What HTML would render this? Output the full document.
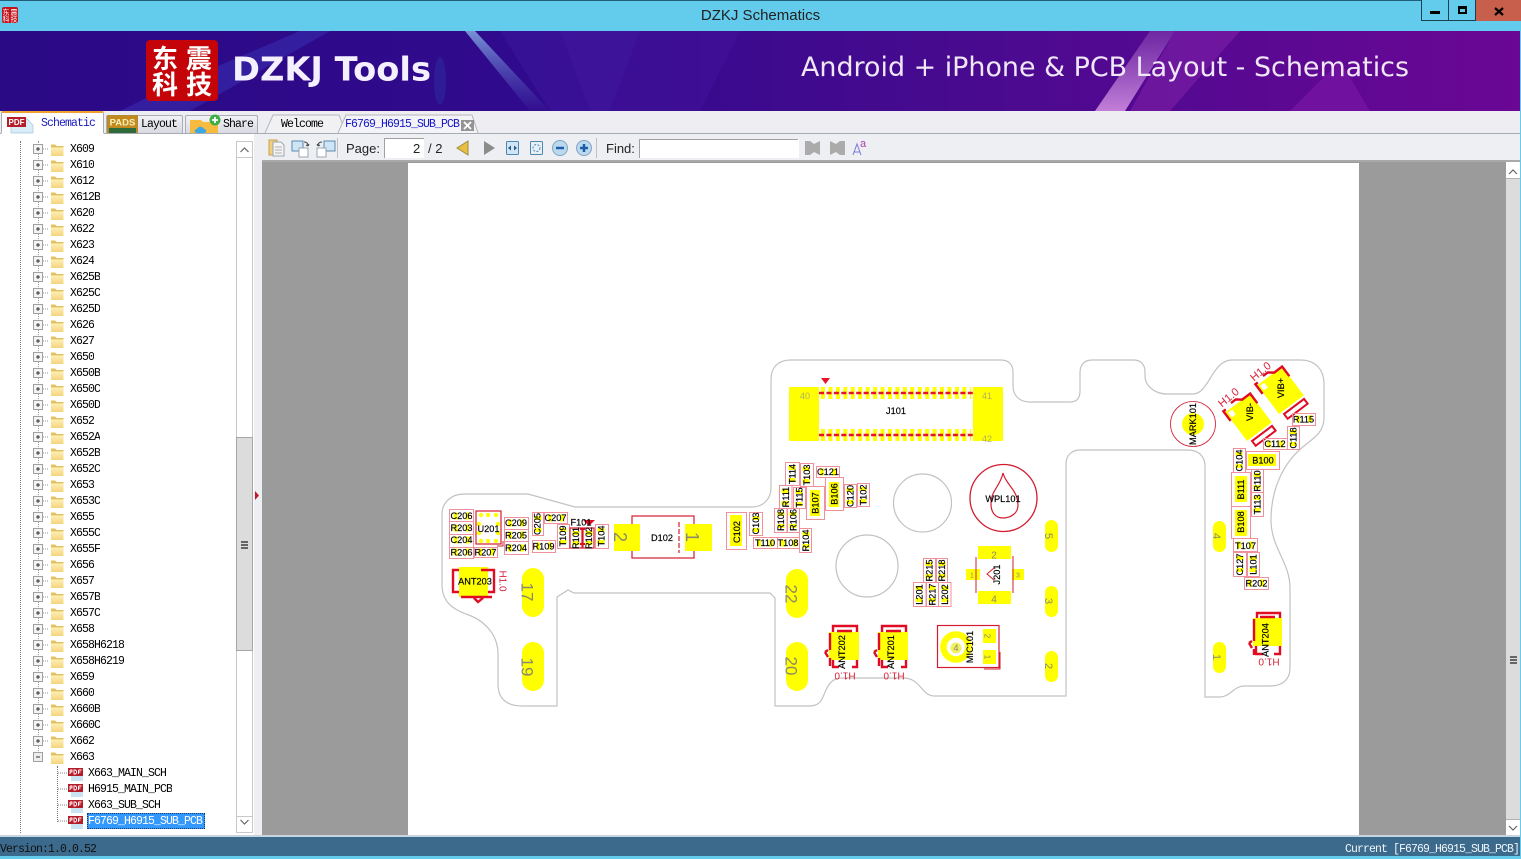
<!DOCTYPE html>
<html><head><meta charset="utf-8"><title>DZKJ Schematics</title>
<style>
html,body{margin:0;padding:0;width:1521px;height:859px;overflow:hidden;background:#eeeef2;font-family:"Liberation Sans",sans-serif}
.a{position:absolute}
.m{font-family:"Liberation Mono","Liberation Serif",monospace;font-size:11.500px;letter-spacing:-.9px;line-height:16px;color:#000;white-space:nowrap}
#tree{left:0;top:141px;width:236px;height:692px;overflow:hidden}
.r{position:relative;height:16px}
.r svg{position:absolute;left:0;top:0}
.r span{position:absolute;left:70px;top:0;height:16px;line-height:18px;overflow:hidden}
.r.p span{left:88px}
.tab{position:absolute;top:115px;height:18px;background:linear-gradient(#f2f2f6,#d8dae2);border:1px solid #a9aeb6;border-bottom:0;box-sizing:border-box;border-radius:2px 2px 0 0}
#pcb text{font-family:"Liberation Sans",sans-serif}
.t{font-size:9.200px;fill:#000;stroke:#000;stroke-width:.18;text-anchor:middle;dominant-baseline:central}
.n{fill:#8a8a6a;text-anchor:middle;dominant-baseline:central}
.h{font-size:10px;fill:#d8203a;text-anchor:middle;dominant-baseline:central}
</style></head><body>

<svg width="0" height="0" style="position:absolute">
<defs>
<linearGradient id="fg" x1="0" x2="0" y1="0" y2="1"><stop offset="0" stop-color="#fdf0b8"/><stop offset="1" stop-color="#f4d47c"/></linearGradient>
<symbol id="f" viewBox="0 0 16 16" width="16" height="16">
<path d="M2 3.500h4l1.500 1.500H14.500v10H2z" fill="#e6c060"/><path d="M2 6.500h12.500V15H2z" fill="url(#fg)"/></symbol>
<symbol id="pl" viewBox="0 0 18 16" width="18" height="16"><rect x=".5" y="3.500" width="9" height="9" fill="#f4f4f4" stroke="#a0a0a0"/><path d="M3 8h4M5 6v4" stroke="#333"/><path d="M10 8h6" stroke="#999" stroke-dasharray="1 1"/></symbol>
<symbol id="pd" viewBox="0 0 20 16" width="20" height="16"><path d="M3 3h12v13H3z" fill="#c8e4f2"/><rect x="0" y="3" width="15" height="8" fill="#b51d2a"/><path d="M2 5v4M2 5h2v2H2M6 5v4h1.500l1-1V6l-1-1zM10.500 5v4M10.500 5h3M10.500 7h2" stroke="#fff" stroke-width=".9" fill="none"/></symbol>
</defs></svg>

<!-- title bar -->
<div class="a" style="left:0;top:0;width:1521px;height:31px;background:#63cbeb;border-top:1px solid #1f5d78;box-sizing:border-box"></div>
<svg class="a" style="left:2px;top:7px" width="17" height="16"><rect width="16" height="16" rx="2" fill="#c3141c"/><text x="4" y="7.500" font-size="7" fill="#fff" text-anchor="middle" font-family="Noto Sans CJK SC,sans-serif">东</text><text x="12" y="7.500" font-size="7" fill="#fff" text-anchor="middle" font-family="Noto Sans CJK SC,sans-serif">震</text><text x="4" y="14.500" font-size="7" fill="#fff" text-anchor="middle" font-family="Noto Sans CJK SC,sans-serif">科</text><text x="12" y="14.500" font-size="7" fill="#fff" text-anchor="middle" font-family="Noto Sans CJK SC,sans-serif">技</text></svg>
<div class="a" style="left:0;top:7px;width:1521px;text-align:center;font-size:15px;line-height:18px;color:#222">DZKJ Schematics</div>
<div class="a" style="left:1421px;top:0;width:28px;height:21px;background:#63cbeb;border:1px solid #1c3f52;border-top:0;box-sizing:border-box"><div class="a" style="left:8px;top:11px;width:10px;height:3px;background:#000"></div></div>
<div class="a" style="left:1448px;top:0;width:28px;height:21px;background:#63cbeb;border:1px solid #1c3f52;border-top:0;box-sizing:border-box"><div class="a" style="left:9px;top:6px;width:9px;height:8px;border:2px solid #000;border-top-width:3px;box-sizing:border-box"></div></div>
<div class="a" style="left:1476px;top:0;width:45px;height:21px;background:#c75f4c"><svg class="a" style="left:18px;top:7px" width="10" height="9"><path d="M1 1l8 7M9 1L1 8" stroke="#000" stroke-width="2.200"/></svg></div>

<!-- banner -->
<svg class="a" style="left:0;top:31px" width="1521" height="80">
<defs>
<linearGradient id="bg" x1="0" x2="1"><stop offset="0" stop-color="#2b0a86"/><stop offset=".35" stop-color="#300a8c"/><stop offset=".62" stop-color="#470a8f"/><stop offset="1" stop-color="#6a0795"/></linearGradient>
<linearGradient id="st" x1="0" x2="0" y1="0" y2="1"><stop offset="0" stop-color="#8fc0f0" stop-opacity=".75"/><stop offset="1" stop-color="#5a70d0" stop-opacity=".05"/></linearGradient>
<linearGradient id="pk" x1="0" x2="0" y1="0" y2="1"><stop offset="0" stop-color="#d79ae8" stop-opacity=".2"/><stop offset="1" stop-color="#e8a6ef" stop-opacity=".75"/></linearGradient>
</defs>
<rect width="1521" height="80" fill="url(#bg)"/>
<polygon points="160,60 300,0 330,0 190,80 120,80" fill="#3a2fb2" opacity=".55"/>
<polygon points="465,0 475,0 550,80 530,80" fill="url(#st)"/>
<polygon points="500,0 640,0 610,80 550,80" fill="#3d169c" opacity=".55"/>
<polygon points="560,0 740,0 700,80 590,80" fill="#4a1aa6" opacity=".3"/>
<polygon points="1150,0 1175,0 1125,80 1095,80" fill="url(#pk)"/>
<polygon points="1175,0 1240,0 1170,80 1130,80" fill="#9a30b8" opacity=".35"/>
<polygon points="1290,80 1340,30 1370,80" fill="#7d18a8" opacity=".6"/>
<ellipse cx="440" cy="50" rx="6" ry="24" fill="#2e6fc4" opacity=".18"/>
<rect x="146" y="9" width="72" height="61" rx="4" fill="#c40408"/>
<g font-family="Noto Sans CJK SC,sans-serif" font-size="26" font-weight="700" fill="#fff" text-anchor="middle">
<text x="165" y="37">东</text><text x="199" y="37">震</text><text x="165" y="63">科</text><text x="199" y="63">技</text></g>
<text x="232" y="49.500" font-family="DejaVu Sans,sans-serif" font-weight="700" font-size="33" fill="#f4f0ff" textLength="199" lengthAdjust="spacingAndGlyphs">DZKJ Tools</text>
<text x="801" y="45" font-family="DejaVu Sans,sans-serif" font-size="27" fill="#efe6f6" textLength="608" lengthAdjust="spacingAndGlyphs">Android + iPhone &amp; PCB Layout - Schematics</text>
</svg>

<!-- left tabs -->
<div class="a" style="left:0;top:111px;width:1521px;height:23px;background:#eeeef2"></div>
<div class="a" style="left:262px;top:133px;width:1259px;height:1px;background:#a8acb2"></div>
<div class="a" style="left:0;top:133px;width:262px;height:1px;background:#a8acb2"></div>
<div class="tab" style="left:1px;top:111px;width:103px;height:23px;background:#fff;border-top:2px solid #f0a030;border-bottom:1px solid #fff"></div>
<svg class="a" style="left:7px;top:115px" width="30" height="19"><path d="M4 4h16l6 6v8H4z" fill="#d9ecf7" stroke="#a8c6da" stroke-width=".7"/><rect x="0" y="2" width="19" height="10" fill="#b51d2a"/><text x="9.500" y="10" font-size="8" font-weight="700" fill="#fff" text-anchor="middle" font-family="Liberation Sans,sans-serif">PDF</text></svg>
<div class="a m" style="left:41px;top:116px;color:#1a1ac0">Schematic</div>
<div class="tab" style="left:106px;width:77px"></div>
<svg class="a" style="left:107px;top:115px" width="32" height="18"><rect x="0" y="0" width="31" height="18" fill="#b58a30"/><rect x="1.500" y="1.500" width="28" height="11" fill="#c68a1a"/><rect x="2" y="13" width="27" height="5" fill="#2e6a3a"/><text x="15.500" y="10.500" font-size="9.500" font-weight="700" fill="#f4f0c0" text-anchor="middle" font-family="Liberation Sans,sans-serif">PADS</text></svg>
<div class="a m" style="left:141px;top:117px">Layout</div>
<div class="tab" style="left:185px;width:73px"></div>
<svg class="a" style="left:189px;top:114px" width="33" height="20"><path d="M1 6h11l2 2h15v11H1z" fill="#f6bb3f"/><path d="M8 19c-3 0-3-4 0-4 1-3 6-3 7 0 3 0 3 4 0 4z" fill="#3ba7e6"/><circle cx="26" cy="6" r="5.500" fill="#3fae46"/><path d="M23 6h6M26 3v6" stroke="#fff" stroke-width="1.800"/></svg>
<div class="a m" style="left:223px;top:117px">Share</div>

<!-- doc tabs -->
<svg class="a" style="left:262px;top:113px" width="222" height="21">
<path d="M3 20L11 2h66l7 18" fill="#f1f1f4" stroke="#b2b6bc"/>
<path d="M76 20l8-18h126l6 18" fill="#f4f4f8" stroke="#b2b6bc"/>
<rect x="199" y="7" width="13" height="11" fill="#8a8a8a" opacity=".9"/><path d="M202 9l7 7M209 9l-7 7" stroke="#fff" stroke-width="1.800"/>
</svg>
<div class="a m" style="left:281px;top:117px">Welcome</div>
<div class="a m" style="left:345px;top:117px;color:#1414c8">F6769_H6915_SUB_PCB</div>

<!-- toolbar -->
<div class="a" style="left:262px;top:134px;width:1259px;height:28px;background:#eeeff2;border-bottom:2px solid #a9a9a9;box-sizing:border-box"></div>
<svg class="a" style="left:262px;top:134px" width="620" height="28">
<g stroke-width="1">
<path d="M7 6h8v15H7z" fill="#f3cf7c" stroke="#c8a050"/><path d="M11 8h8l3 3v11H11z" fill="#f4f4f4" stroke="#9aa6b0"/><path d="M13 13h7M13 16h7M13 19h7" stroke="#b0b0b0"/>
<path d="M30 7h11v10H30z" fill="#cfe4f4" stroke="#5a8ab0"/><path d="M37 14h9v9H37z" fill="#fff" stroke="#9aa6b0"/><path d="M42 8c3 0 4 2 4 4M46 12l-2-1M46 12l1-2" stroke="#444" fill="none"/>
<path d="M62 7h11v10H62z" fill="#cfe4f4" stroke="#5a8ab0"/><path d="M55 14h9v9h-9z" fill="#fff" stroke="#9aa6b0"/><path d="M60 8c-3 0-4 2-4 4M56 12l2-1M56 12l-1-2" stroke="#444" fill="none"/>
<path d="M75.500 4v20" stroke="#c0c0c0"/>
</g>
<rect x="122" y="4" width="40" height="20" fill="#fff"/><path d="M122.500 24V4.500H162" stroke="#a0a0a0" fill="none"/>
<path d="M206 7L195 14l11 7z" fill="#e8c040" stroke="#a08a40"/>
<path d="M222 7l11 7-11 7z" fill="#8c8c8c"/>
<rect x="244.500" y="7.500" width="12" height="13" rx="1" fill="#d0e6f6" stroke="#4e86b0"/><path d="M246 14l3-2.500v5zM255 14l-3-2.500v5z" fill="#2a5a80"/>
<rect x="268.500" y="7.500" width="12" height="13" rx="1" fill="#e6f0f8" stroke="#4e86b0"/><circle cx="274.500" cy="14" r="3.500" fill="none" stroke="#4e86b0" stroke-dasharray="2 1.500"/>
<circle cx="298" cy="14" r="7.500" fill="#bcd8ee" stroke="#7ea6c6"/><path d="M294 14h8" stroke="#1c5ea8" stroke-width="2.500"/>
<circle cx="322" cy="14" r="7.500" fill="#bcd8ee" stroke="#7ea6c6"/><path d="M318 14h8M322 10v8" stroke="#1c5ea8" stroke-width="2.500"/>
<path d="M334.500 4v20" stroke="#c0c0c0"/>
<rect x="377" y="5" width="160" height="19" fill="#fff"/><path d="M377.500 24V5.500H536" stroke="#a0a0a0" fill="none"/>
<path d="M543 7h5l4 3 6-3v14l-6-3-4 3h-5z" fill="#ababab"/>
<path d="M568 7l6 3 4-3h5v14h-5l-4-3-6 3z" fill="#ababab"/>
<path d="M591 21l4-11 4 11M592.500 18h5" stroke="#7a7ad8" stroke-width="1" fill="none"/>
<text x="598" y="13" font-size="11" fill="#b040b0" font-family="Liberation Sans,sans-serif">a</text>
</svg>
<div class="a" style="left:346px;top:141px;font-size:13px;line-height:15px;color:#222">Page:</div>
<div class="a" style="left:413px;top:141px;font-size:13px;line-height:15px;color:#222">2</div>
<div class="a" style="left:428px;top:141px;font-size:13px;line-height:15px;color:#222">/ 2</div>
<div class="a" style="left:606px;top:141px;font-size:13px;line-height:15px;color:#222">Find:</div>

<!-- left panel -->
<div class="a" style="left:0;top:134px;width:254px;height:701px;background:#fff"></div>
<div class="a" style="left:254px;top:134px;width:8px;height:702px;background:#eeeff2"></div>
<svg class="a" style="left:253px;top:490px" width="8" height="11"><path d="M2 1l4 4.500L2 10z" fill="#c0182a"/></svg>
<div class="a" style="left:20px;top:141px;width:0;height:692px;border-left:1px dotted #777"></div>
<div class="a" style="left:38px;top:141px;width:0;height:616px;border-left:1px dotted #999"></div>
<div class="a" style="left:57px;top:766px;width:0;height:56px;border-left:1px dotted #777"></div>

<div class="a m" id="tree">
<div class="r"><svg width="70" height="16"><use href="#pl" x="33"/><use href="#f" x="49"/></svg><span>X609</span></div>
<div class="r"><svg width="70" height="16"><use href="#pl" x="33"/><use href="#f" x="49"/></svg><span>X610</span></div>
<div class="r"><svg width="70" height="16"><use href="#pl" x="33"/><use href="#f" x="49"/></svg><span>X612</span></div>
<div class="r"><svg width="70" height="16"><use href="#pl" x="33"/><use href="#f" x="49"/></svg><span>X612B</span></div>
<div class="r"><svg width="70" height="16"><use href="#pl" x="33"/><use href="#f" x="49"/></svg><span>X620</span></div>
<div class="r"><svg width="70" height="16"><use href="#pl" x="33"/><use href="#f" x="49"/></svg><span>X622</span></div>
<div class="r"><svg width="70" height="16"><use href="#pl" x="33"/><use href="#f" x="49"/></svg><span>X623</span></div>
<div class="r"><svg width="70" height="16"><use href="#pl" x="33"/><use href="#f" x="49"/></svg><span>X624</span></div>
<div class="r"><svg width="70" height="16"><use href="#pl" x="33"/><use href="#f" x="49"/></svg><span>X625B</span></div>
<div class="r"><svg width="70" height="16"><use href="#pl" x="33"/><use href="#f" x="49"/></svg><span>X625C</span></div>
<div class="r"><svg width="70" height="16"><use href="#pl" x="33"/><use href="#f" x="49"/></svg><span>X625D</span></div>
<div class="r"><svg width="70" height="16"><use href="#pl" x="33"/><use href="#f" x="49"/></svg><span>X626</span></div>
<div class="r"><svg width="70" height="16"><use href="#pl" x="33"/><use href="#f" x="49"/></svg><span>X627</span></div>
<div class="r"><svg width="70" height="16"><use href="#pl" x="33"/><use href="#f" x="49"/></svg><span>X650</span></div>
<div class="r"><svg width="70" height="16"><use href="#pl" x="33"/><use href="#f" x="49"/></svg><span>X650B</span></div>
<div class="r"><svg width="70" height="16"><use href="#pl" x="33"/><use href="#f" x="49"/></svg><span>X650C</span></div>
<div class="r"><svg width="70" height="16"><use href="#pl" x="33"/><use href="#f" x="49"/></svg><span>X650D</span></div>
<div class="r"><svg width="70" height="16"><use href="#pl" x="33"/><use href="#f" x="49"/></svg><span>X652</span></div>
<div class="r"><svg width="70" height="16"><use href="#pl" x="33"/><use href="#f" x="49"/></svg><span>X652A</span></div>
<div class="r"><svg width="70" height="16"><use href="#pl" x="33"/><use href="#f" x="49"/></svg><span>X652B</span></div>
<div class="r"><svg width="70" height="16"><use href="#pl" x="33"/><use href="#f" x="49"/></svg><span>X652C</span></div>
<div class="r"><svg width="70" height="16"><use href="#pl" x="33"/><use href="#f" x="49"/></svg><span>X653</span></div>
<div class="r"><svg width="70" height="16"><use href="#pl" x="33"/><use href="#f" x="49"/></svg><span>X653C</span></div>
<div class="r"><svg width="70" height="16"><use href="#pl" x="33"/><use href="#f" x="49"/></svg><span>X655</span></div>
<div class="r"><svg width="70" height="16"><use href="#pl" x="33"/><use href="#f" x="49"/></svg><span>X655C</span></div>
<div class="r"><svg width="70" height="16"><use href="#pl" x="33"/><use href="#f" x="49"/></svg><span>X655F</span></div>
<div class="r"><svg width="70" height="16"><use href="#pl" x="33"/><use href="#f" x="49"/></svg><span>X656</span></div>
<div class="r"><svg width="70" height="16"><use href="#pl" x="33"/><use href="#f" x="49"/></svg><span>X657</span></div>
<div class="r"><svg width="70" height="16"><use href="#pl" x="33"/><use href="#f" x="49"/></svg><span>X657B</span></div>
<div class="r"><svg width="70" height="16"><use href="#pl" x="33"/><use href="#f" x="49"/></svg><span>X657C</span></div>
<div class="r"><svg width="70" height="16"><use href="#pl" x="33"/><use href="#f" x="49"/></svg><span>X658</span></div>
<div class="r"><svg width="70" height="16"><use href="#pl" x="33"/><use href="#f" x="49"/></svg><span>X658H6218</span></div>
<div class="r"><svg width="70" height="16"><use href="#pl" x="33"/><use href="#f" x="49"/></svg><span>X658H6219</span></div>
<div class="r"><svg width="70" height="16"><use href="#pl" x="33"/><use href="#f" x="49"/></svg><span>X659</span></div>
<div class="r"><svg width="70" height="16"><use href="#pl" x="33"/><use href="#f" x="49"/></svg><span>X660</span></div>
<div class="r"><svg width="70" height="16"><use href="#pl" x="33"/><use href="#f" x="49"/></svg><span>X660B</span></div>
<div class="r"><svg width="70" height="16"><use href="#pl" x="33"/><use href="#f" x="49"/></svg><span>X660C</span></div>
<div class="r"><svg width="70" height="16"><use href="#pl" x="33"/><use href="#f" x="49"/></svg><span>X662</span></div>
<div class="r"><svg width="70" height="16"><rect x="33.500" y="3.500" width="9" height="9" fill="#eee" stroke="#a0a0a0"/><path d="M36 8h4" stroke="#333"/><use href="#f" x="49"/></svg><span>X663</span></div>
<div class="r p"><svg width="90" height="16"><path d="M58 8h10" stroke="#888" stroke-dasharray="1 1"/><use href="#pd" x="68" y="0"/></svg><span>X663_MAIN_SCH</span></div>
<div class="r p"><svg width="90" height="16"><path d="M58 8h10" stroke="#888" stroke-dasharray="1 1"/><use href="#pd" x="68" y="0"/></svg><span>H6915_MAIN_PCB</span></div>
<div class="r p"><svg width="90" height="16"><path d="M58 8h10" stroke="#888" stroke-dasharray="1 1"/><use href="#pd" x="68" y="0"/></svg><span>X663_SUB_SCH</span></div>
<div class="r p"><svg width="90" height="16"><path d="M58 8h10" stroke="#888" stroke-dasharray="1 1"/><use href="#pd" x="68" y="0"/></svg><span style="left:87px;width:118px;padding-left:1px;box-sizing:border-box;background:#3399ff;color:#fff;outline:1px dotted #123a66;outline-offset:-1px">F6769_H6915_SUB_PCB</span></div>
<div class="r"><svg width="70" height="16"><use href="#f" x="49" y="8"/></svg></div>
</div>

<!-- left scrollbar -->
<div class="a" style="left:236px;top:141px;width:17px;height:692px;background:#fff;border:1px solid #c8c8c8;box-sizing:border-box"></div>
<div class="a" style="left:236px;top:437px;width:17px;height:214px;background:#dcdcdc;border:1px solid #a6a6a6;box-sizing:border-box"></div>
<div class="a" style="left:241px;top:541px;width:7px;height:1.500px;background:#666;box-shadow:0 3px 0 #666,0 6px 0 #666"></div>
<svg class="a" style="left:236px;top:141px" width="17" height="692"><path d="M4.500 11l4-4 4 4" stroke="#666" fill="none" stroke-width="1.200"/><path d="M4.500 679l4 4 4-4" stroke="#666" fill="none" stroke-width="1.200"/><path d="M0 16.500h17M0 675.500h17" stroke="#c8c8c8"/></svg>

<!-- viewer -->
<div class="a" style="left:262px;top:162px;width:1245px;height:673px;background:#9b9b9b"></div>
<div class="a" style="left:408px;top:163px;width:951px;height:672px;background:#fff"></div>
<div class="a" style="left:1506px;top:162px;width:14px;height:673px;background:#fff"></div>
<div class="a" style="left:1506px;top:178px;width:14px;height:642px;background:#dcdcdc;border-top:1px solid #b4b4b4;border-bottom:1px solid #b4b4b4;box-sizing:border-box"></div>
<div class="a" style="left:1510px;top:656px;width:7px;height:1.500px;background:#666;box-shadow:0 3px 0 #666,0 6px 0 #666"></div>
<svg class="a" style="left:1506px;top:162px" width="14" height="673"><path d="M3 12l4-4 4 4M3 664l4 4 4-4" stroke="#666" fill="none" stroke-width="1.200"/></svg>

<!-- PCB -->
<svg id="pcb" class="a" style="left:0;top:0" width="1521" height="859">
<path fill="none" stroke="#c2c2c2" stroke-width="1.200" d="M771 380C771 367 778 360 791 360H1001C1009 360 1013 365 1013 372V386C1013 395 1019 402 1030 402H1070C1077 402 1080 398 1080 391V373C1080 365 1084 360 1092 360H1134C1141 360 1145 365 1145 372V376C1145 386 1155 394 1167 394H1193C1209 394 1212 360 1232 360H1300C1316 360 1324 370 1324 384V418C1324 432 1314 438 1304 446C1284 462 1271 488 1271 520C1271 548 1290 562 1290 588V668C1290 680 1282 686 1270 686H1244C1234 686 1230 697 1220 697H1205V466C1205 456 1198 450 1188 450H1080C1071 450 1066 456 1066 464V696H934C922 696 920 678 904 678H842C826 678 826 695 820 702C817 705 814 706 808 706H775V598L770 593H574L568 590L557 597V706H522C506 706 498 698 498 684V654C498 634 484 620 466 614C450 608 442 600 442 584V514C442 502 452 494 464 494H528L575 507H752C763 507 771 499 771 488Z"/>
<circle cx="922.500" cy="503" r="29" fill="none" stroke="#c2c2c2" stroke-width="1.200"/>
<circle cx="867" cy="566" r="31" fill="none" stroke="#c2c2c2" stroke-width="1.200"/>

<!-- yellow main pads -->
<g fill="#ffff00">
<rect x="789" y="387" width="30" height="54"/><rect x="973" y="387" width="30" height="54"/>
<rect x="522" y="568" width="22" height="49" rx="11"/><rect x="522" y="642" width="22" height="49" rx="11"/>
<rect x="786" y="569" width="22" height="49" rx="11"/><rect x="786" y="642" width="22" height="49" rx="11"/>
<rect x="1045" y="520" width="13" height="32" rx="6.500"/><rect x="1045" y="586" width="13" height="31" rx="6.500"/><rect x="1045" y="651" width="13" height="31" rx="6.500"/>
<rect x="1213" y="521" width="13" height="31" rx="6.500"/><rect x="1213" y="642" width="13" height="31" rx="6.500"/>
<rect x="978" y="546" width="33" height="13"/><rect x="978" y="591" width="33" height="13"/><rect x="966" y="569" width="14" height="11"/><rect x="1012" y="569" width="12" height="11"/>
<rect x="459" y="567" width="29" height="30"/>
<rect x="829" y="632" width="30" height="28"/><rect x="878" y="632" width="30" height="28"/><rect x="1253" y="618" width="29" height="28"/>
<rect x="983" y="629" width="13" height="14"/><rect x="983" y="650" width="13" height="14"/>
<circle cx="1193" cy="424" r="11"/>
<rect x="730" y="515" width="12" height="31"/><rect x="810" y="490" width="10" height="26"/><rect x="829" y="482" width="10" height="25"/>
<rect x="1248" y="454" width="28" height="12"/><rect x="1235" y="476" width="12" height="26"/><rect x="1235" y="510" width="12" height="26"/>
</g>
<!-- J101 pins -->
<path d="M821 393h150M821 435h150" stroke="#ffff00" stroke-width="12" stroke-dasharray="4 3.440"/>
<path d="M819 393h154M819 435h154" stroke="#e8102a" stroke-width="2.400" stroke-dasharray="5 2.440"/>
<path d="M821 378h9l-4.500 6z" fill="#e8102a"/>
<!-- WPL / mark / mic -->
<circle cx="1003.500" cy="498" r="33.500" fill="none" stroke="#d41c30" stroke-width="1.300"/>
<path d="M1003 473C1006 485 1018 490 1018 505C1018 513 1011 518 1003 518C995 518 991 512 991 504C991 490 1000 487 1003 473Z" fill="none" stroke="#d41c30" stroke-width="1.200"/>
<circle cx="1193" cy="424" r="22.500" fill="none" stroke="#d41c30" stroke-width=".8"/>
<rect x="937.500" y="625.500" width="61.500" height="42" fill="none" stroke="#d41c30" stroke-width="1.200"/>
<path d="M984 669h16v-17" fill="none" stroke="#d41c30"/>
<circle cx="956" cy="647" r="12.500" fill="none" stroke="#ffff00" stroke-width="6.500"/>
<circle cx="956" cy="648" r="5.500" fill="#f0f060"/>
<!-- D102 -->
<rect x="632" y="516" width="62" height="42" fill="none" stroke="#d41c30" stroke-width="1.200"/>
<rect x="614" y="524" width="26" height="27" fill="#ffff00"/><rect x="685" y="524" width="27" height="27" fill="#ffff00"/>
<path d="M679 522v31" stroke="#d41c30" stroke-width="1.200" stroke-dasharray="5 2"/>
<!-- U201 -->
<rect x="476" y="511" width="25" height="33" fill="#fff" stroke="#d41c30" stroke-width="1.200"/>
<g fill="#ffff00"><circle cx="481" cy="515" r="2.200"/><circle cx="488" cy="515" r="2.200"/><circle cx="496" cy="515" r="2.200"/><circle cx="481" cy="541" r="2.200"/><circle cx="488" cy="541" r="2.200"/><circle cx="496" cy="541" r="2.200"/><circle cx="479" cy="524" r="2.200"/><circle cx="498" cy="524" r="2.200"/><circle cx="479" cy="533" r="2.200"/><circle cx="498" cy="533" r="2.200"/></g>
<path d="M497 546h6v-5" fill="none" stroke="#d41c30"/>
<!-- J201 outline -->
<path d="M976 557v36M1013 556v37" stroke="#d41c30" stroke-width="1"/><path d="M994 568l-7 6 7 6" fill="none" stroke="#d41c30"/>

<!-- red ANT shapes -->
<g fill="none" stroke="#e00c24" stroke-width="2.400">
<path d="M459 570h-6v22h6M481 570h7M488 570h6v22h-6M461 597h31M474 598l4 4 5-4"/>
<path d="M833 632v-6h24v6M837 631h15M833 660v7h6M852 667h5v-7M825 652l3-2M825 652l3 5M830 633v17M830 658v8"/>
<path d="M882 632v-6h24v6M886 631h15M882 660v7h6M901 667h5v-7M874 652l3-2M874 652l3 5M879 633v17M879 658v8"/>
<path d="M1257 618v-5h23v5M1260 617h15M1256 646v8h7M1274 654h6v-8M1249 643l3-2M1249 643l3 5M1254 619v22M1254 649v6"/>
</g>
<!-- VIB -->
<g transform="translate(1249 417) rotate(-37)"><rect x="-16" y="-18" width="31" height="36" fill="#ffff00"/><rect x="-12" y="21" width="25" height="6" fill="#fff" stroke="#e00c24" stroke-width="2"/><path d="M-17 -8v-12h3M-6 -22h6l5 4 10 0v12" fill="none" stroke="#e00c24" stroke-width="2.400"/><rect x="-14" y="-16" width="5" height="6" fill="#fff"/></g>
<g transform="translate(1281 390) rotate(-37)"><rect x="-16" y="-18" width="31" height="36" fill="#ffff00"/><rect x="-12" y="21" width="25" height="6" fill="#fff" stroke="#e00c24" stroke-width="2"/><path d="M-17 -8v-12h3M-6 -22h6l5 4 10 0v12" fill="none" stroke="#e00c24" stroke-width="2.400"/><rect x="-14" y="-16" width="5" height="6" fill="#fff"/></g>

<!-- component outlines -->
<g fill="none" stroke="#f0909c" stroke-width="1">
<rect x="449.500" y="509.500" width="24" height="12"/><rect x="449.500" y="521.500" width="24" height="13"/><rect x="449.500" y="534.500" width="24" height="13"/><rect x="449.500" y="547.500" width="24" height="11"/><rect x="474.500" y="547.500" width="23" height="10"/>
<rect x="504.500" y="517.500" width="24" height="12"/><rect x="504.500" y="529.500" width="24" height="12"/><rect x="504.500" y="541.500" width="24" height="13"/>
<rect x="532.500" y="512.500" width="11" height="23"/><rect x="544.500" y="512.500" width="23" height="11"/><rect x="532.500" y="540.500" width="23" height="12"/><rect x="557.500" y="524.500" width="12" height="24"/><rect x="595.500" y="524.500" width="13" height="24"/>
<rect x="726.500" y="512.500" width="20" height="37"/><rect x="749.500" y="512.500" width="13" height="23"/><rect x="753.500" y="537.500" width="24" height="11"/><rect x="777.500" y="537.500" width="22" height="11"/><rect x="799.500" y="528.500" width="12" height="24"/>
<rect x="774.500" y="508.500" width="12.500" height="24"/><rect x="787.500" y="508.500" width="12" height="24"/><rect x="779.500" y="485.500" width="12.500" height="23"/><rect x="793.500" y="487.500" width="12" height="21"/>
<rect x="785.500" y="462.500" width="14" height="23"/><rect x="800.500" y="463.500" width="13" height="23"/><rect x="816.500" y="466.500" width="23" height="11"/><rect x="806.500" y="486.500" width="18" height="33"/><rect x="825.500" y="477.500" width="18" height="33"/><rect x="844.500" y="484.500" width="12" height="23"/><rect x="857.500" y="483.500" width="12" height="23"/>
<rect x="923.500" y="558.500" width="12" height="24"/><rect x="936.500" y="558.500" width="11" height="24"/><rect x="913.500" y="582.500" width="12.500" height="24"/><rect x="926.500" y="582.500" width="12" height="24"/><rect x="938.500" y="582.500" width="12.500" height="24"/>
<rect x="1292.500" y="413.500" width="23" height="12"/><rect x="1287.500" y="426.500" width="12" height="23"/><rect x="1263.500" y="438.500" width="24" height="11"/><rect x="1233.500" y="448.500" width="12" height="24"/><rect x="1246.500" y="451.500" width="33" height="18"/><rect x="1251.500" y="469.500" width="12" height="23"/><rect x="1251.500" y="492.500" width="12" height="24"/><rect x="1231.500" y="472.500" width="19" height="34"/><rect x="1231.500" y="506.500" width="19" height="32"/><rect x="1233.500" y="538.500" width="24" height="13"/><rect x="1233.500" y="552.500" width="13" height="24"/><rect x="1247.500" y="552.500" width="12" height="24"/><rect x="1244.500" y="577.500" width="24" height="12"/>
</g>
<!-- small part yellow pads -->
<path fill="none" stroke="#ffff00" stroke-width="7" stroke-dasharray="4 8 4" d="M453.500 516h16M453.500 540h16M508 523h16M548 518h16M538 516v16M563 528v16M601 528v16M756 516v16M757 543h16M781 543h16M806 532v16M781 512v16M793 512v16M785 489v16M799 490v16M792 466v16M806 467v16M820 472h16M850 488v16M863 487v16M929 562v16M942 562v16M919 586v16M932 586v16M945 586v16M1296 419h16M1293 430v16M1267 444h16M1239 452v16M1257 473v16M1257 496v16M1237 545h16M1240 556v16M1253 556v16M1248 583h16M453.500 528h16M453.500 552h16M478 552h16M508 535h16M508 548h16M536 546h16"/>
<!-- R101 / R102 / F101 -->
<rect x="570" y="528" width="12" height="20" fill="#fff" stroke="#d41c30" stroke-width="1.200"/><rect x="583" y="528" width="11" height="20" fill="#fff" stroke="#d41c30" stroke-width="1.200"/>
<path fill="none" stroke="#ffff00" stroke-width="7" stroke-dasharray="4 6 4" d="M576 531v14M589 531v14"/>
<path d="M580 529h5M580 544h5M582.500 529v15" stroke="#e00c24" stroke-width="2"/>
<path d="M583 520h12l-6 6z" fill="#e00c24"/>

<!-- labels -->
<g class="lb">
<text class="t" x="896" y="411">J101</text>
<text class="t" x="461.500" y="516">C206</text><text class="t" x="461.500" y="528">R203</text><text class="t" x="461.500" y="540">C204</text><text class="t" x="461.500" y="552.500">R206</text><text class="t" x="485.500" y="552.500">R207</text>
<text class="t" x="488.500" y="529">U201</text>
<text class="t" x="516" y="523">C209</text><text class="t" x="516" y="535.500">R205</text><text class="t" x="516" y="548">R204</text>
<text class="t" x="537.500" y="524" transform="rotate(-90 537.500 524)">C205</text><text class="t" x="555.500" y="518">C207</text><text class="t" x="543.500" y="546.500">R109</text>
<text class="t" x="563" y="536" transform="rotate(-90 563 536)">T109</text>
<text class="t" x="576" y="538" transform="rotate(-90 576 538)">R101</text><text class="t" x="589" y="538" transform="rotate(-90 589 538)">R102</text>
<text class="t" x="581" y="522.500">F101</text>
<text class="t" x="601.500" y="536" transform="rotate(-90 601.500 536)">T104</text>
<text class="t" x="662" y="538">D102</text>
<text class="t" x="475" y="581.500">ANT203</text>
<text class="t" x="737" y="532" transform="rotate(-90 737 532)">C102</text><text class="t" x="756" y="523.500" transform="rotate(-90 756 523.500)">C103</text>
<text class="t" x="765" y="543">T110</text><text class="t" x="788" y="543">T108</text>
<text class="t" x="806" y="540.500" transform="rotate(-90 806 540.500)">R104</text>
<text class="t" x="781" y="520" transform="rotate(-90 781 520)">R108</text><text class="t" x="793.500" y="520" transform="rotate(-90 793.500 520)">R106</text>
<text class="t" x="786" y="497" transform="rotate(-90 786 497)">R111</text><text class="t" x="799.500" y="497.500" transform="rotate(-90 799.500 497.500)">T115</text>
<text class="t" x="792.500" y="474" transform="rotate(-90 792.500 474)">T114</text><text class="t" x="807" y="475" transform="rotate(-90 807 475)">T103</text>
<text class="t" x="828" y="472">C121</text>
<text class="t" x="815.500" y="503" transform="rotate(-90 815.500 503)">B107</text><text class="t" x="834.500" y="494" transform="rotate(-90 834.500 494)">B106</text>
<text class="t" x="850.500" y="496" transform="rotate(-90 850.500 496)">C120</text><text class="t" x="863.500" y="495" transform="rotate(-90 863.500 495)">T102</text>
<text class="t" x="1003" y="499">WPL101</text>
<text class="t" x="929.500" y="570.500" transform="rotate(-90 929.500 570.500)">R215</text><text class="t" x="942" y="570.500" transform="rotate(-90 942 570.500)">R218</text>
<text class="t" x="919.500" y="594.500" transform="rotate(-90 919.500 594.500)">L201</text><text class="t" x="932.500" y="594.500" transform="rotate(-90 932.500 594.500)">R217</text><text class="t" x="945" y="594.500" transform="rotate(-90 945 594.500)">L202</text>
<text class="t" x="997" y="574.500" transform="rotate(-90 997 574.500)">J201</text>
<text class="t" x="842" y="652" transform="rotate(-90 842 652)">ANT202</text><text class="t" x="891" y="652" transform="rotate(-90 891 652)">ANT201</text>
<text class="t" x="970" y="647" transform="rotate(-90 970 647)">MIC101</text>
<text class="t" x="1193" y="424" transform="rotate(-90 1193 424)">MARK101</text>
<text class="t" x="1250" y="412" transform="rotate(-90 1250 412)">VIB-</text><text class="t" x="1281" y="388" transform="rotate(-90 1281 388)">VIB+</text>
<text class="t" x="1303.500" y="419.500">R115</text><text class="t" x="1293.500" y="438" transform="rotate(-90 1293.500 438)">C118</text><text class="t" x="1275" y="444">C112</text>
<text class="t" x="1239.500" y="460.500" transform="rotate(-90 1239.500 460.500)">C104</text><text class="t" x="1263" y="460.500">B100</text>
<text class="t" x="1257.500" y="481" transform="rotate(-90 1257.500 481)">R110</text><text class="t" x="1257.500" y="504.500" transform="rotate(-90 1257.500 504.500)">T113</text>
<text class="t" x="1241" y="489.500" transform="rotate(-90 1241 489.500)">B111</text><text class="t" x="1241" y="522" transform="rotate(-90 1241 522)">B108</text>
<text class="t" x="1245.500" y="546">T107</text><text class="t" x="1240" y="564.500" transform="rotate(-90 1240 564.500)">C127</text><text class="t" x="1253.500" y="564.500" transform="rotate(-90 1253.500 564.500)">L101</text><text class="t" x="1256.500" y="583.500">R202</text>
<text class="t" x="1265.500" y="640" transform="rotate(-90 1265.500 640)">ANT204</text>
</g>
<!-- red H1.0 -->
<text class="h" x="502" y="581" transform="rotate(90 502 581)">H1.0</text>
<text class="h" x="845" y="675" transform="rotate(180 845 675)">H1.0</text>
<text class="h" x="894" y="675" transform="rotate(180 894 675)">H1.0</text>
<text class="h" x="1269" y="661" transform="rotate(180 1269 661)">H1.0</text>
<text class="h" x="1229" y="398" transform="rotate(-40 1229 398)" style="font-size:11px">H1.0</text>
<text class="h" x="1261" y="372" transform="rotate(-40 1261 372)" style="font-size:11px">H1.0</text>
<!-- gray numbers -->
<g class="nums">
<text class="n" x="805" y="396" style="font-size:9px;fill:#b0b060">40</text><text class="n" x="987" y="396" style="font-size:9px;fill:#b0b060">41</text><text class="n" x="987" y="439" style="font-size:9px;fill:#b0b060">42</text>
<text class="n" x="620" y="537" transform="rotate(90 620 537)" style="font-size:18px">2</text><text class="n" x="692" y="537" transform="rotate(90 692 537)" style="font-size:18px">1</text>
<text class="n" x="527" y="592" transform="rotate(90 527 592)" style="font-size:17px">17</text><text class="n" x="527" y="667" transform="rotate(90 527 667)" style="font-size:17px">19</text>
<text class="n" x="791" y="594" transform="rotate(90 791 594)" style="font-size:17px">22</text><text class="n" x="791" y="666" transform="rotate(90 791 666)" style="font-size:17px">20</text>
<text class="n" x="1048" y="536" transform="rotate(90 1048 536)" style="font-size:11px">5</text><text class="n" x="1048" y="601" transform="rotate(90 1048 601)" style="font-size:11px">3</text><text class="n" x="1048" y="666" transform="rotate(90 1048 666)" style="font-size:11px">2</text>
<text class="n" x="1216" y="536" transform="rotate(90 1216 536)" style="font-size:11px">4</text><text class="n" x="1216" y="657" transform="rotate(90 1216 657)" style="font-size:11px">1</text>
<text class="n" x="994" y="556" style="font-size:10px">2</text><text class="n" x="994" y="600" style="font-size:10px">4</text><text class="n" x="972" y="576" style="font-size:7px">1</text><text class="n" x="1018" y="576" style="font-size:7px">3</text>
<text class="n" x="956" y="648" style="font-size:9px">4</text><text class="n" x="987" y="636" transform="rotate(90 987 636)" style="font-size:8px">2</text><text class="n" x="987" y="657" transform="rotate(90 987 657)" style="font-size:8px">1</text>
</g>
</svg>

<!-- status -->
<div class="a" style="left:0;top:835px;width:1521px;height:2px;background:#c8d4de"></div>
<div class="a" style="left:0;top:837px;width:1521px;height:19px;background:#3c6a8c"></div>
<div class="a" style="left:0;top:856px;width:1521px;height:3px;background:#63cbeb"></div>
<div class="a" style="left:1520px;top:31px;width:1px;height:828px;background:#63cbeb"></div>
<div class="a m" style="left:0;top:842px;color:#111">Version:1.0.0.52</div>
<div class="a m" style="left:1345px;top:842px;color:#eef4f8">Current [F6769_H6915_SUB_PCB]</div>
</body></html>
